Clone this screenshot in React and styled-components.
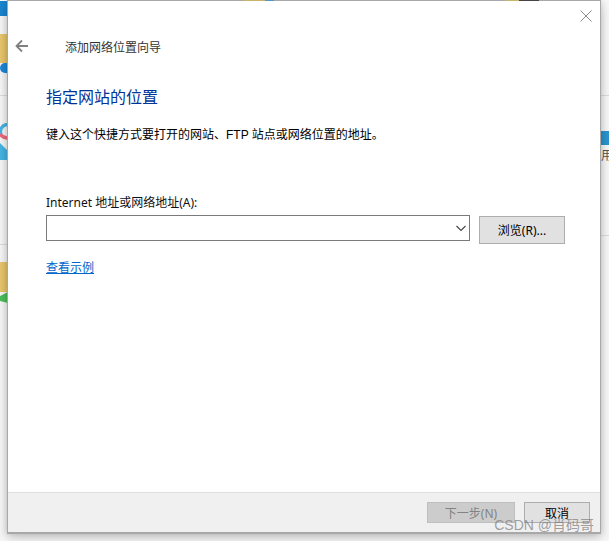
import React from "react";
import styled, { createGlobalStyle } from "styled-components";

const Global = createGlobalStyle`
  html, body { margin: 0; padding: 0; background: #fbfbfb; }
  body { font-family: "Noto Sans", "Noto Sans CJK SC", sans-serif; }
`;

const Desktop = styled.div`
  width: 609px;
  height: 541px;
  overflow: hidden;
  background: #f8f8f8;
  display: flex;
  flex-direction: column;
`;

const TopEdge = styled.div`
  height: 1px;
  flex: none;
  margin: 0 8px 0 7px;
  background: #a8a8a8;
  display: flex;
  position: relative;
  z-index: 2;
`;

const EdgeGap = styled.span`
  flex: none;
  width: ${(p) => p.$w}px;
  background: ${(p) => p.$c || "transparent"};
`;

const Stage = styled.div`
  display: flex;
  align-items: flex-start;
  height: 534px;
`;

const Strip = styled.div`
  flex: none;
  width: ${(p) => p.$w}px;
  height: 533px;
  overflow: hidden;
  display: flex;
  flex-direction: column;
`;

const Swatch = styled.div`
  flex: none;
  height: ${(p) => p.$h}px;
  background: ${(p) => p.$c || "transparent"};
  border-radius: ${(p) => p.$r || 0};
`;

const ClippedWord = styled.span`
  flex: none;
  height: 20px;
  white-space: nowrap;
  font: 12px/20px "Noto Sans CJK SC", sans-serif;
  color: #555;
`;

const Dialog = styled.div`
  position: relative;
  z-index: 1;
  flex: none;
  width: 594px;
  height: 533px;
  background: #fff;
  border: 1px solid #a8a8a8;
  border-width: 0 1px 2px 1px;
  box-sizing: border-box;
  box-shadow: 0 4px 12px rgba(0, 0, 0, 0.2), 0 0 6px rgba(0, 0, 0, 0.14);
  display: flex;
  flex-direction: column;
`;

const Head = styled.div`
  height: 85px;
  flex: none;
  display: flex;
  flex-direction: column;
`;

const CloseRow = styled.div`
  display: flex;
  justify-content: flex-end;
  padding: 9px 6px 0 0;
  height: 28px;
  box-sizing: border-box;
`;

const TitleRow = styled.div`
  display: flex;
  align-items: center;
  height: 34px;
  padding-left: 7px;
`;

const IconBtn = styled.span`
  display: block;
  width: 14px;
  height: 14px;
  line-height: 0;
`;

const WizardTitle = styled.span`
  margin-left: 36px;
  font: 12px "Noto Sans CJK SC", sans-serif;
  color: #333;
`;

const Content = styled.div`
  flex: 1;
  display: flex;
  flex-direction: column;
  padding: 0 34px 0 38px;
`;

const Heading = styled.h1`
  margin: 0;
  font: 400 16px/20px "Noto Sans CJK SC", sans-serif;
  color: #003399;
`;

const Instruction = styled.p`
  margin: 19px 0 0;
  font: 12px/20px "Liberation Sans", "Noto Sans CJK SC", sans-serif;
  color: #000;
`;

const FieldLabel = styled.label`
  display: block;
  margin-top: 50px;
  font: 12px/16px "Noto Sans", "Noto Sans CJK SC", sans-serif;
  color: #111;
`;

const FieldRow = styled.div`
  display: flex;
  align-items: flex-start;
  margin-top: 4px;
`;

const Combo = styled.div`
  width: 424px;
  height: 26px;
  box-sizing: border-box;
  border: 1px solid #7a7a7a;
  background: #fff;
  display: flex;
  align-items: center;
  justify-content: flex-end;
  padding-right: 2px;
`;

const Button = styled.button`
  font: 12px "Noto Sans", "Noto Sans CJK SC", sans-serif;
  box-sizing: border-box;
  width: ${(p) => p.$w}px;
  height: ${(p) => p.$h}px;
  padding: 0;
  background: ${(p) => (p.disabled ? "#cccccc" : "#e1e1e1")};
  border: 1px solid ${(p) => (p.disabled ? "#bfbfbf" : "#adadad")};
  color: ${(p) => (p.disabled ? "#838383" : "#000")};
`;

const Browse = styled(Button)`
  margin-left: 9px;
  margin-top: 1px;
`;

const ExampleLink = styled.a`
  align-self: flex-start;
  margin-top: 15px;
  font: 12px/16px "Noto Sans CJK SC", sans-serif;
  color: #0066cc;
  text-decoration: underline;
`;

const Footer = styled.div`
  flex: none;
  height: 40px;
  box-sizing: border-box;
  background: #f0f0f0;
  border-top: 1px solid #dfdfdf;
  display: flex;
  justify-content: flex-end;
  align-items: flex-start;
  gap: 9px;
  padding: 9px 10px 0 0;
`;

const Watermark = styled.span`
  position: absolute;
  right: 6px;
  bottom: -2px;
  z-index: 2;
  font: 14px/18px "Liberation Sans", "Noto Sans CJK SC", sans-serif;
  color: rgba(125, 125, 125, 0.72);
  white-space: nowrap;
`;

const LeftLogo = () => (
  <svg width="8" height="37" viewBox="0 0 8 37" style={{ flex: "none", display: "block" }}>
    <path d="M8 1.5C2 1.5 -1 7 1 12" stroke="#4ab4e4" strokeWidth="3.5" fill="none" />
    <path d="M0 11c2 3 5 4 8 4" stroke="#ee6a7c" strokeWidth="3.5" fill="none" />
    <path d="M0 20L8 28V37H0z" fill="#45b5e5" />
  </svg>
);

const LeftArrow = () => (
  <svg width="8" height="12" viewBox="0 0 8 12" style={{ flex: "none", display: "block" }}>
    <path d="M0 4L8 0V11L0 9z" fill="#4cc05a" />
  </svg>
);

export default function App() {
  return (
    <>
      <Global />
      <Desktop>
        <TopEdge>
          <EdgeGap $w={237} />
          <EdgeGap $w={21} $c="#c9b46c" />
          <EdgeGap $w={9} $c="#4f97c7" />
          <EdgeGap $w={231} />
          <EdgeGap $w={14} $c="#c9b46c" />
          <EdgeGap $w={20} $c="#444444" />
        </TopEdge>
        <Stage>
          <Strip $w={7}>
            <Swatch $h={15} $c="#1a86d0" />
            <Swatch $h={18} />
            <Swatch $h={29} $c="#e9c76c" />
            <Swatch $h={10} $c="#1e88d8" $r="5px 0 0 5px" />
            <Swatch $h={22} />
            <Swatch $h={1} $c="#dddddd" />
            <Swatch $h={27} />
            <LeftLogo />
            <Swatch $h={84} />
            <Swatch $h={1} $c="#dddddd" />
            <Swatch $h={17} />
            <Swatch $h={30} $c="#e9c76c" />
            <LeftArrow />
          </Strip>
          <Dialog>
            <Head>
              <CloseRow>
                <IconBtn>
                  <svg width="12" height="12" viewBox="0 0 12 12">
                    <path d="M.5.5l11 11M11.500.5l-11 11" stroke="#8a8a8a" strokeWidth="1" fill="none" />
                  </svg>
                </IconBtn>
              </CloseRow>
              <TitleRow>
                <IconBtn>
                  <svg width="14" height="14" viewBox="0 0 14 14">
                    <path d="M1.500 7H13M7 1.500L1.500 7 7 12.500" stroke="#808080" strokeWidth="1.8" fill="none" />
                  </svg>
                </IconBtn>
                <WizardTitle>添加网络位置向导</WizardTitle>
              </TitleRow>
            </Head>
            <Content>
              <Heading>指定网站的位置</Heading>
              <Instruction>键入这个快捷方式要打开的网站、FTP 站点或网络位置的地址。</Instruction>
              <FieldLabel>Internet 地址或网络地址(A):</FieldLabel>
              <FieldRow>
                <Combo>
                  <svg width="12" height="12" viewBox="0 0 12 12">
                    <path d="M1.500 4l4.500 4.500L10.500 4" stroke="#444" strokeWidth="1.1" fill="none" />
                  </svg>
                </Combo>
                <Browse $w={86} $h={28}>浏览(R)...</Browse>
              </FieldRow>
              <ExampleLink href="#">查看示例</ExampleLink>
            </Content>
            <Footer>
              <Button disabled $w={88} $h={21}>下一步(N)</Button>
              <Button $w={66} $h={21}>取消</Button>
            </Footer>
            <Watermark>CSDN @肖码哥</Watermark>
          </Dialog>
          <Strip $w={8}>
            <Swatch $h={94} />
            <Swatch $h={1} $c="#dddddd" />
            <Swatch $h={35} />
            <Swatch $h={14} $c="#2b94cf" />
            <ClippedWord>用</ClippedWord>
            <Swatch $h={70} />
            <Swatch $h={1} $c="#dddddd" />
          </Strip>
        </Stage>
      </Desktop>
    </>
  );
}
